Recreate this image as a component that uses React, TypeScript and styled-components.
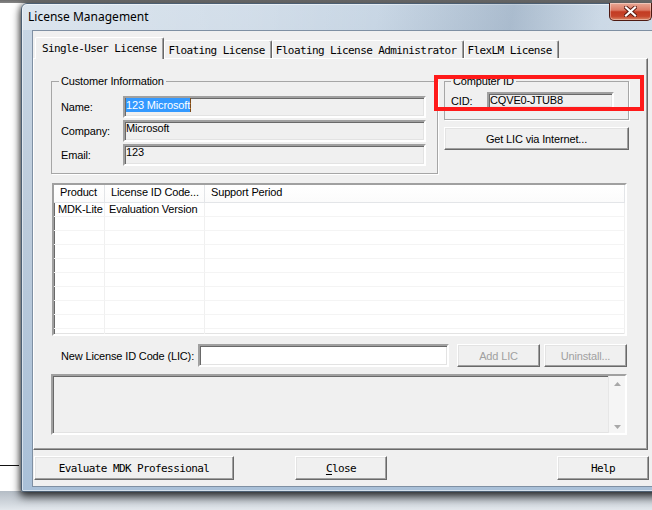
import React from "react";
import styled, { createGlobalStyle, css } from "styled-components";

const SANS = `"Liberation Sans", Arial, sans-serif`;
const MONO = `"DejaVu Sans Mono", "Liberation Mono", monospace`;

const Global = createGlobalStyle`
  html, body { margin: 0; padding: 0; background: #ffffff; }
  body { width: 652px; height: 510px; overflow: hidden; }
  #root { width: 652px; height: 510px; }
  * { box-sizing: border-box; }
`;

const Desktop = styled.div`
  position: relative;
  width: 652px;
  height: 510px;
  overflow: hidden;
  background:
    linear-gradient(to bottom, #6e6e6e 0px, #858585 3px, transparent 3px),
    linear-gradient(to bottom, transparent 491px, #b4bcc5 491px, #e2e7ec 510px),
    #ffffff;
`;

const BackLine = styled.div`
  position: absolute;
  left: 0;
  top: 465px;
  width: 19px;
  height: 1px;
  background: #111;
`;

const Window = styled.div`
  position: absolute;
  left: 21px;
  top: 3px;
  width: 645px;
  height: 489px;
  border: 1px solid #4c5f73;
  border-radius: 6px 6px 2px 2px;
  background: linear-gradient(180deg, #c9d7e5 0%, #bccbdb 45%, #a9c0d8 100%);
  box-shadow: 0 4px 8px 1px rgba(0, 0, 0, 0.7), -1px 0 5px rgba(0, 0, 0, 0.3),
    inset 0 0 0 1px rgba(255, 255, 255, 0.5);
  display: flex;
  flex-direction: column;
`;

const TitleBar = styled.div`
  flex: none;
  height: 26px;
  display: flex;
  align-items: flex-start;
  padding-left: 6px;
  border-radius: 5px 5px 0 0;
  background: linear-gradient(
    100deg,
    rgba(255, 255, 255, 0.35) 0%,
    rgba(255, 255, 255, 0.18) 35%,
    rgba(255, 255, 255, 0) 55%,
    rgba(50, 80, 115, 0.2) 76%,
    rgba(255, 255, 255, 0.08) 90%,
    rgba(255, 255, 255, 0.15) 100%
  );
`;

const Title = styled.span`
  font-family: "Noto Sans", "Open Sans", sans-serif;
  font-size: 12px;
  line-height: 26px;
  color: #000;
`;

const CloseBox = styled.div`
  margin-left: auto;
  margin-right: 13px;
  margin-top: -1px;
  width: 43px;
  height: 18px;
  border: 1px solid #4e1a12;
  border-top: none;
  border-radius: 0 0 5px 5px;
  background: linear-gradient(180deg, #e9a996 0%, #dc7a64 42%, #c33b22 52%, #c5452b 78%, #dc8867 100%);
  box-shadow: inset 0 0 0 1px rgba(255, 255, 255, 0.35);
  display: flex;
  align-items: center;
  justify-content: center;
`;

const Body = styled.div`
  flex: 1;
  display: flex;
  padding: 0 10px 4px 10px;
`;

const Client = styled.div`
  flex: 1;
  background: #f0f0f0;
  border: 1px solid #7f90a3;
  display: flex;
  flex-direction: column;
`;

const TabRow = styled.div`
  flex: none;
  margin-top: 6px;
  height: 21px;
  display: flex;
  align-items: flex-end;
  padding-left: 2px;
  position: relative;
  z-index: 1;
`;

const Tab = styled.div<{ $active?: boolean }>`
  font-family: ${MONO};
  font-size: 11px;
  letter-spacing: -0.6px;
  color: #000;
  white-space: nowrap;
  background: #f0f0f0;
  border: 1px solid;
  border-bottom: none;
  border-color: #ffffff #696969 transparent #ffffff;
  box-shadow: inset -1px 0 0 #a0a0a0;
  border-radius: 2px 2px 0 0;
  display: flex;
  align-items: center;
  ${(p) =>
    p.$active
      ? css`
          height: 22px;
          margin-bottom: -1px;
          padding: 0 7px 1px 6px;
        `
      : css`
          height: 18px;
          padding: 1px 6px 0 3px;
        `}
`;

const Panel = styled.div`
  flex: none;
  width: 615px;
  height: 392px;
  border: 1px solid;
  border-color: #ffffff #696969 #696969 #ffffff;
  box-shadow: inset -1px -1px 0 #a0a0a0;
  padding: 16px 18px 0 17px;
  display: flex;
  flex-direction: column;
  font-family: ${SANS};
  font-size: 11px;
  letter-spacing: -0.15px;
  color: #000;
`;

const TopSection = styled.div`
  display: flex;
  gap: 6px;
`;

const Group = styled.fieldset<{ $w: number }>`
  margin: 0;
  min-width: 0;
  width: ${(p) => p.$w}px;
  border: 1px solid #a6a6a6;
  box-shadow: 1px 1px 0 #ffffff;
`;

const CustomerGroup = styled(Group)`
  padding: 9px 11px 7px 9px;
`;

const IdGroup = styled(Group)`
  padding: 5px 14px 10px 6px;
`;

const Legend = styled.legend<{ $shift?: number }>`
  padding: 0 2px;
  margin-left: ${(p) => p.$shift ?? 0}px;
  line-height: 12px;
  font-size: 11px;
  color: #000;
`;

const FieldGrid = styled.div<{ $label: number }>`
  display: grid;
  grid-template-columns: ${(p) => p.$label}px 1fr;
  row-gap: 2px;
  align-items: center;
`;

const Label = styled.span`
  white-space: nowrap;
`;

const sunken = css`
  border: 2px solid;
  border-color: #a0a0a0 #ffffff #ffffff #a0a0a0;
  box-shadow: inset 1px 1px 0 #696969, inset -1px -1px 0 #e3e3e3;
`;

const Field = styled.div<{ $h: number; $white?: boolean }>`
  ${sunken};
  height: ${(p) => p.$h}px;
  align-self: stretch;
  background: ${(p) => (p.$white ? "#ffffff" : "#f0f0f0")};
  padding: 0 0 0 1px;
  line-height: 13px;
  white-space: nowrap;
  overflow: hidden;
`;

const Selected = styled.span`
  background: #3399ff;
  color: #fff;
  display: inline-block;
  line-height: 14px;
  border-right: 1px solid #7a4a1a;
`;

const RightColumn = styled.div`
  position: relative;
  width: 185px;
  display: flex;
  flex-direction: column;
`;

const Highlight = styled.div`
  position: absolute;
  left: -10px;
  top: 0;
  width: 210px;
  height: 36px;
  border: 4px solid #ff1a1a;
  pointer-events: none;
`;

const raised = css`
  background: #f0f0f0;
  border: 1px solid;
  border-color: #ffffff #696969 #696969 #ffffff;
  box-shadow: inset -1px -1px 0 #a0a0a0, inset 1px 1px 0 #e3e3e3;
  display: flex;
  align-items: center;
  justify-content: center;
  white-space: nowrap;
`;

const Button = styled.div<{ $w?: number; $h: number; $ml?: number; $disabled?: boolean }>`
  ${raised};
  width: ${(p) => (p.$w ? `${p.$w}px` : "auto")};
  height: ${(p) => p.$h}px;
  margin-left: ${(p) => p.$ml ?? 0}px;
  color: ${(p) => (p.$disabled ? "#a0a0a0" : "#000")};
  flex: none;
`;

const WideButton = styled(Button)`
  margin-top: 7px;
`;

const ListView = styled.div`
  ${sunken};
  margin: 9px 0 0 1px;
  width: 575px;
  height: 153px;
  background: #ffffff;
  overflow: hidden;
`;

const ListGrid = styled.div`
  display: grid;
  grid-template-columns: 51px 100px 1fr;
  grid-template-rows: 18px;
  grid-auto-rows: 14px;
`;

const HeadCell = styled.div`
  background: linear-gradient(#ffffff, #fbfbfb);
  border-right: 1px solid #e3e5e8;
  border-bottom: 1px solid #e3e5e8;
  padding-left: 6px;
  line-height: 15px;
  white-space: nowrap;
  overflow: hidden;
`;

const Cell = styled.div`
  border-right: 1px solid #f0f0f0;
  border-bottom: 1px solid #f4f4f4;
  padding-left: 4px;
  line-height: 13px;
  white-space: nowrap;
  overflow: hidden;
`;

const LicRow = styled.div`
  margin-top: 8px;
  display: flex;
  align-items: center;
  height: 23px;
`;

const LicLabel = styled.span`
  width: 147px;
  padding-left: 10px;
  white-space: nowrap;
  flex: none;
`;

const LicInput = styled(Field)`
  width: 251px;
  flex: none;
`;

const Memo = styled.div`
  ${sunken};
  margin-top: 7px;
  width: 576px;
  height: 61px;
  background: #f0f0f0;
  display: flex;
  justify-content: flex-end;
`;

const ScrollBar = styled.div`
  width: 17px;
  background: #f5f5f5;
  border-left: 1px solid #e6e6e6;
  display: flex;
  flex-direction: column;
  justify-content: space-between;
  align-items: center;
  padding: 6px 0 4px;
`;

const ButtonBar = styled.div`
  flex: none;
  padding-top: 6px;
  display: flex;
  font-family: ${MONO};
  font-size: 11px;
  letter-spacing: -0.6px;
`;

const Mnemonic = styled.span`
  text-decoration: underline;
  text-underline-offset: 2px;
`;

const Arrow = ({ down }: { down?: boolean }) => (
  <svg width="7" height="4" viewBox="0 0 7 4">
    <polygon points={down ? "0,0 7,0 3.5,4" : "3.5,0 7,4 0,4"} fill="#a8a8a8" />
  </svg>
);

const CloseGlyph = () => (
  <svg width="13" height="11" viewBox="0 0 13 11">
    <path d="M2 1.5 L11 9.5 M11 1.5 L2 9.5" stroke="#5a1a10" strokeWidth="4" strokeLinecap="square" />
    <path d="M2 1.5 L11 9.5 M11 1.5 L2 9.5" stroke="#ffffff" strokeWidth="2.2" strokeLinecap="square" />
  </svg>
);

const tabs = ["Floating License", "Floating License Administrator", "FlexLM License"];
const emptyRows = Array.from({ length: 9 });

export default function App() {
  return (
    <Desktop>
      <Global />
      <BackLine />
      <Window>
        <TitleBar>
          <Title>License Management</Title>
          <CloseBox>
            <CloseGlyph />
          </CloseBox>
        </TitleBar>
        <Body>
          <Client>
            <TabRow>
              <Tab $active>Single-User License</Tab>
              {tabs.map((t) => (
                <Tab key={t}>{t}</Tab>
              ))}
            </TabRow>
            <Panel>
              <TopSection>
                <CustomerGroup $w={387}>
                  <Legend $shift={-2}>Customer Information</Legend>
                  <FieldGrid $label={62}>
                    <Label>Name:</Label>
                    <Field $h={22}>
                      <Selected>123 Microsoft</Selected>
                    </Field>
                    <Label>Company:</Label>
                    <Field $h={22}>Microsoft</Field>
                    <Label>Email:</Label>
                    <Field $h={22}>123</Field>
                  </FieldGrid>
                </CustomerGroup>
                <RightColumn>
                  <IdGroup $w={185}>
                    <Legend>Computer ID</Legend>
                    <FieldGrid $label={36}>
                      <Label>CID:</Label>
                      <Field $h={17}>CQVE0-JTUB8</Field>
                    </FieldGrid>
                  </IdGroup>
                  <WideButton $h={23}>Get LIC via Internet...</WideButton>
                  <Highlight />
                </RightColumn>
              </TopSection>
              <ListView>
                <ListGrid>
                  <HeadCell>Product</HeadCell>
                  <HeadCell>License ID Code...</HeadCell>
                  <HeadCell>Support Period</HeadCell>
                  <Cell>MDK-Lite</Cell>
                  <Cell>Evaluation Version</Cell>
                  <Cell />
                  {emptyRows.map((_, i) => (
                    <React.Fragment key={i}>
                      <Cell />
                      <Cell />
                      <Cell />
                    </React.Fragment>
                  ))}
                </ListGrid>
              </ListView>
              <LicRow>
                <LicLabel>New License ID Code (LIC):</LicLabel>
                <LicInput $h={23} $white />
                <Button $w={83} $h={23} $ml={8} $disabled>
                  Add LIC
                </Button>
                <Button $w={83} $h={23} $ml={4} $disabled>
                  Uninstall...
                </Button>
              </LicRow>
              <Memo>
                <ScrollBar>
                  <Arrow />
                  <Arrow down />
                </ScrollBar>
              </Memo>
            </Panel>
            <ButtonBar>
              <Button $w={200} $h={24} $ml={1}>
                Evaluate MDK Professional
              </Button>
              <Button $w={92} $h={24} $ml={61}>
                <Mnemonic>C</Mnemonic>lose
              </Button>
              <Button $w={92} $h={24} $ml={170}>
                Help
              </Button>
            </ButtonBar>
          </Client>
        </Body>
      </Window>
    </Desktop>
  );
}
